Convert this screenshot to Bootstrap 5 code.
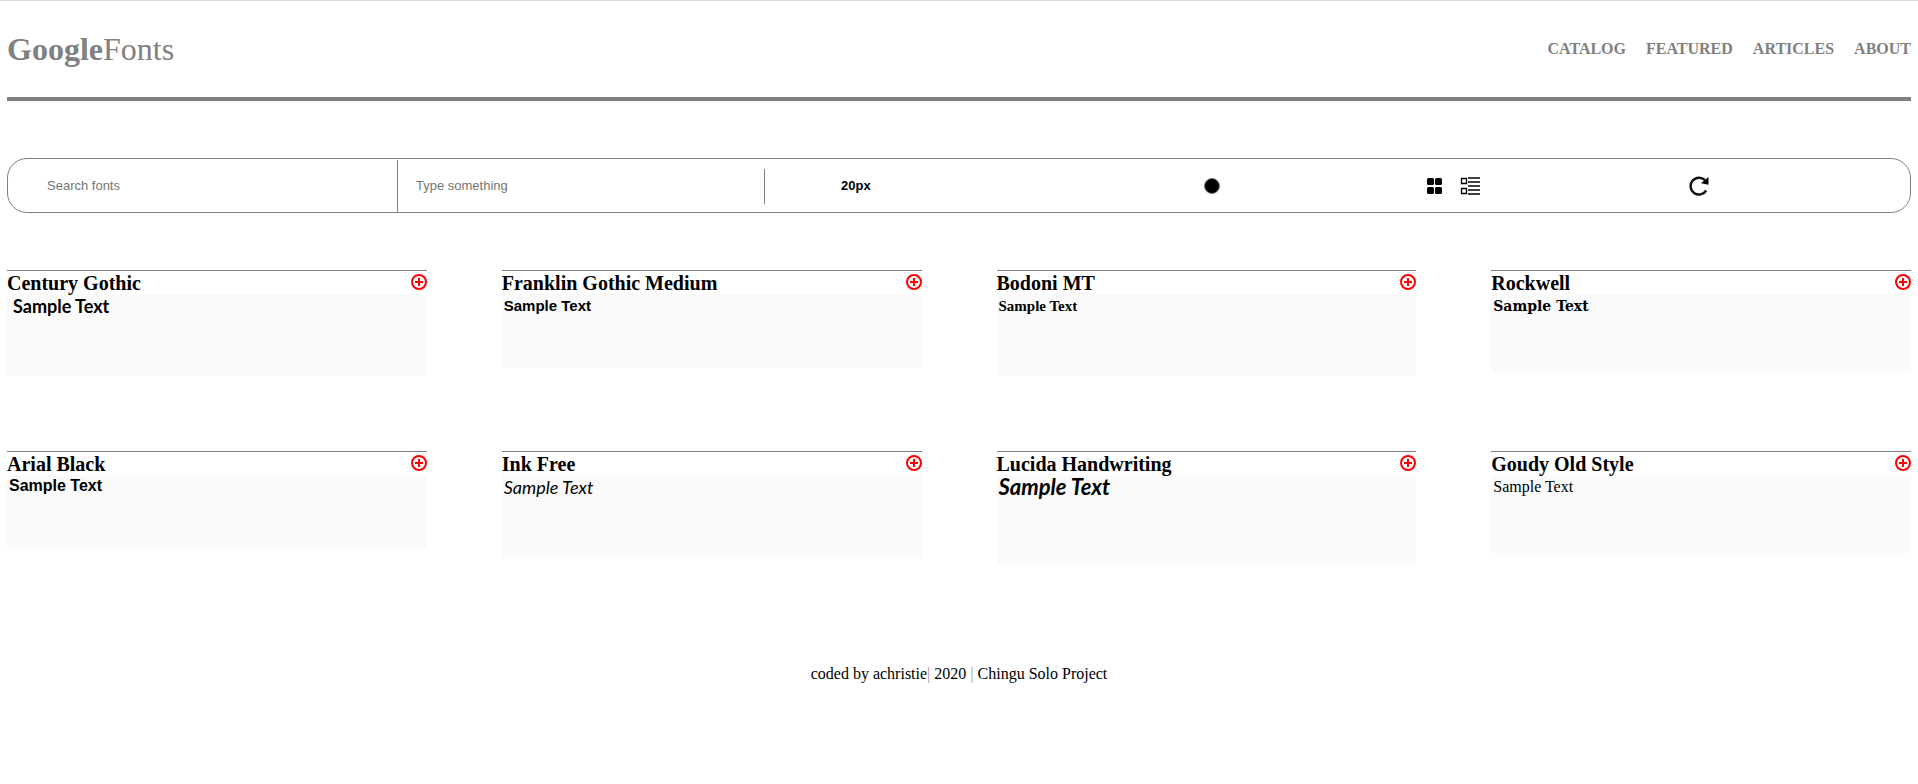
<!DOCTYPE html>
<html lang="en">
<head>
<meta charset="utf-8">
<meta name="viewport" content="width=device-width, initial-scale=1">
<title>GoogleFonts</title>
<link href="https://cdn.jsdelivr.net/npm/bootstrap@5.3.0/dist/css/bootstrap.min.css" rel="stylesheet">
<style>
  body { font-family: "Liberation Serif", serif; font-size: 16px; line-height: 20px; color: #000; background: #fff; border-top: 1px solid #dadce0; }
  .page { padding: 0 7px; }
  .masthead { height: 100px; border-bottom: 4px solid #808080; color: #808080; }
  .masthead a { color: #808080; text-decoration: none; }
  .brand { font-size: 32px; line-height: 36px; }
  .site-links { gap: 20px; font-weight: 700; }
  .toolbar { display: grid; grid-template-columns: 390fr 367fr 333fr 228fr 254fr 238fr 92fr; height: 55px; margin: 57px 0; border: 1px solid #808080; border-radius: 20px; font-family: "Liberation Sans", sans-serif; font-size: 13px; padding-top: 1px; }
  .toolbar input { font-size: 13px; border: 0; outline: 0; background: none; min-width: 0; color: #000; }
  .toolbar input::placeholder { color: #757575; opacity: 1; }
  .search-field { padding: 0 20px 2px 39px; border-right: 1px solid #808080 !important; }
  .sample-field { height: 35px; padding: 0 18px 2px; border-right: 1px solid #808080 !important; }
  .size-select { appearance: none; border: 0; background: none; font-weight: 700; color: #000; font-size: 13px; margin-left: 76px; padding: 0; }
  .plain-btn { border: 0; padding: 0; background: none; color: #000; display: flex; }
  .view-btns { gap: 18px; }
  .font-grid { display: grid; grid-template-columns: repeat(4, minmax(0, 1fr)); gap: 75px; align-items: start; }
  .font-tile { border-top: 1px solid #808080; }
  .font-tile header { height: 23px; }
  .font-tile h3 { font-size: 20px; line-height: 24px; font-weight: 700; margin: 0; }
  .add-btn { color: #f00; padding-top: 3px; }
  .sample { margin: 0; padding: 2px; height: 74px; background: #fafafa; font-weight: 700; }
  .h-md { height: 78px; }
  .h-lg { height: 82px; }
  .h-xl { height: 90px; }
  .f-century { font-family: Lato, sans-serif; font-size: 18px; padding-left: 6px; }
  .f-franklin { font-family: "Liberation Sans", sans-serif; font-size: 15px; }
  .f-bodoni { font-family: "Liberation Serif", serif; font-size: 15px; }
  .f-rockwell { font-family: "DejaVu Serif", serif; font-size: 14px; }
  .f-black { font-family: "Liberation Sans", sans-serif; line-height: 18px; }
  .f-ink { font-family: Lato, sans-serif; font-weight: 400; font-style: italic; font-size: 18px; }
  .f-lucida { font-family: Lato, sans-serif; font-style: italic; font-size: 22px; }
  .f-goudy { font-family: "Liberation Serif", serif; font-weight: 400; }
  .credits { margin-top: 99px; }
  .credits .bar { color: #999; }
</style>
</head>
<body>
<svg class="d-none" xmlns="http://www.w3.org/2000/svg">
  <symbol id="plus" viewBox="0 0 16 16"><g fill="none" stroke="currentColor" stroke-width="2"><ellipse cx="8" cy="8" rx="7" ry="7"/><path d="M8 4v8M4 8h8"/></g></symbol>
</svg>
<div class="page">
  <header class="masthead d-flex justify-content-between align-items-center">
    <a class="brand" href="#"><b>Google</b>Fonts</a>
    <nav class="site-links d-flex">
      <a href="#">CATALOG</a><a href="#">FEATURED</a><a href="#">ARTICLES</a><a href="#">ABOUT</a>
    </nav>
  </header>

  <form class="toolbar align-items-center">
    <input class="search-field h-100" type="text" placeholder="Search fonts" aria-label="Search fonts">
    <input class="sample-field" type="text" placeholder="Type something" aria-label="Type something">
    <div><select class="size-select" aria-label="Font size"><option>20px</option></select></div>
    <div class="d-flex justify-content-center">
      <button class="plain-btn" type="button" aria-label="Colour mode"><svg width="16" height="16" viewBox="0 0 16 16"><circle cx="8" cy="8" r="7.500" fill="#000" stroke="#777"/></svg></button>
    </div>
    <div class="view-btns d-flex justify-content-center align-items-center">
      <button class="plain-btn" type="button" aria-label="Grid view"><svg width="16" height="16" viewBox="0 0 16 16"><rect x="1" width="7" height="7" rx="1.500"/><rect x="9" width="7" height="7" rx="1.500"/><rect x="1" y="9" width="7" height="7" rx="1.500"/><rect x="9" y="9" width="7" height="7" rx="1.500"/></svg></button>
      <button class="plain-btn" type="button" aria-label="List view"><svg width="20" height="18" viewBox="0 0 20 18"><path d="M1.500 1.500h5v5h-5zM1.500 11.500h5v5h-5zM8 1h12M8 5h12M8 9h12M8 13h12M8 17h12" fill="none" stroke="#000" stroke-width="1.300"/></svg></button>
    </div>
    <div class="d-flex justify-content-center">
      <button class="plain-btn" type="button" aria-label="Reset"><svg width="20" height="20" viewBox="0 0 20 20"><path d="M17.200 14.500A8.400 8.400 0 1 1 16 4.200" fill="none" stroke="#111" stroke-width="2.400"/><path d="M19.500 1v7.700l-7.500-1.500z"/></svg></button>
    </div>
  </form>

  <main class="font-grid">
    <article class="font-tile"><header class="d-flex justify-content-between align-items-start"><h3>Century Gothic</h3><button class="plain-btn add-btn" type="button" aria-label="Add Century Gothic"><svg width="16" height="16"><use href="#plus"/></svg></button></header><p class="sample h-lg f-century">Sample Text</p></article>
    <article class="font-tile"><header class="d-flex justify-content-between align-items-start"><h3>Franklin Gothic Medium</h3><button class="plain-btn add-btn" type="button" aria-label="Add Franklin Gothic Medium"><svg width="16" height="16"><use href="#plus"/></svg></button></header><p class="sample f-franklin">Sample Text</p></article>
    <article class="font-tile"><header class="d-flex justify-content-between align-items-start"><h3>Bodoni MT</h3><button class="plain-btn add-btn" type="button" aria-label="Add Bodoni MT"><svg width="16" height="16"><use href="#plus"/></svg></button></header><p class="sample h-lg f-bodoni">Sample Text</p></article>
    <article class="font-tile"><header class="d-flex justify-content-between align-items-start"><h3>Rockwell</h3><button class="plain-btn add-btn" type="button" aria-label="Add Rockwell"><svg width="16" height="16"><use href="#plus"/></svg></button></header><p class="sample h-md f-rockwell">Sample Text</p></article>
    <article class="font-tile"><header class="d-flex justify-content-between align-items-start"><h3>Arial Black</h3><button class="plain-btn add-btn" type="button" aria-label="Add Arial Black"><svg width="16" height="16"><use href="#plus"/></svg></button></header><p class="sample f-black">Sample Text</p></article>
    <article class="font-tile"><header class="d-flex justify-content-between align-items-start"><h3>Ink Free</h3><button class="plain-btn add-btn" type="button" aria-label="Add Ink Free"><svg width="16" height="16"><use href="#plus"/></svg></button></header><p class="sample h-lg f-ink">Sample Text</p></article>
    <article class="font-tile"><header class="d-flex justify-content-between align-items-start"><h3>Lucida Handwriting</h3><button class="plain-btn add-btn" type="button" aria-label="Add Lucida Handwriting"><svg width="16" height="16"><use href="#plus"/></svg></button></header><p class="sample h-xl f-lucida">Sample Text</p></article>
    <article class="font-tile"><header class="d-flex justify-content-between align-items-start"><h3>Goudy Old Style</h3><button class="plain-btn add-btn" type="button" aria-label="Add Goudy Old Style"><svg width="16" height="16"><use href="#plus"/></svg></button></header><p class="sample h-md f-goudy">Sample Text</p></article>
  </main>

  <footer class="credits text-center">coded by achristie<span class="bar">|</span> 2020 <span class="bar">|</span> Chingu Solo Project</footer>
</div>
<script src="https://cdn.jsdelivr.net/npm/bootstrap@5.3.0/dist/js/bootstrap.bundle.min.js"></script>
</body>
</html>
